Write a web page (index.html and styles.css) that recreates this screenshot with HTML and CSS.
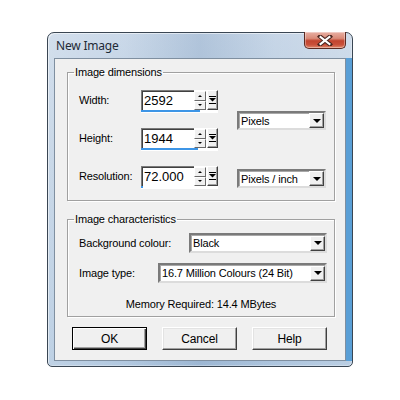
FILE: index.html
```html
<!DOCTYPE html>
<html>
<head>
<meta charset="utf-8">
<link rel="stylesheet" href="styles.css">
</head>
<body>
<div class="window">
  <div class="titlebar">
    <span class="title">New Image</span>
    <div class="close">
      <svg width="16" height="11" viewBox="0 0 16 11">
        <path d="M3 1.5 L13 9.5 M13 1.5 L3 9.5" stroke="#4a2620" stroke-width="4.2" stroke-linecap="square"/>
        <path d="M3.6 2 L12.4 9 M12.4 2 L3.6 9" stroke="#fff" stroke-width="2.2" stroke-linecap="square"/>
      </svg>
    </div>
  </div>
  <div class="client">
    <fieldset class="group dims">
      <legend>Image dimensions</legend>
      <div class="dims-grid">
        <span class="lbl row1">Width:</span>
        <div class="spin row1">
          <div class="spin-top">
            <div class="edit">2592</div>
            <div class="updown"><div class="sbtn"><i class="tri up"></i></div><div class="sbtn"><i class="tri dn"></i></div></div>
            <div class="drop"><svg width="7" height="9" viewBox="0 0 7 9"><rect x="0" y="0" width="7" height="1" fill="#000"/><path d="M0 2 H7 L3.5 5.5 Z" fill="#000"/><rect x="0" y="7" width="7" height="1" fill="#000"/></svg></div>
          </div>
          <div class="bar"><div class="fill" style="width:59px"></div></div>
        </div>
        <div class="combo unit">
          <span class="ctext">Pixels</span>
          <div class="cbtn"><i class="tri dn big"></i></div>
        </div>

        <span class="lbl row2">Height:</span>
        <div class="spin row2">
          <div class="spin-top">
            <div class="edit">1944</div>
            <div class="updown"><div class="sbtn"><i class="tri up"></i></div><div class="sbtn"><i class="tri dn"></i></div></div>
            <div class="drop"><svg width="7" height="9" viewBox="0 0 7 9"><rect x="0" y="0" width="7" height="1" fill="#000"/><path d="M0 2 H7 L3.5 5.5 Z" fill="#000"/><rect x="0" y="7" width="7" height="1" fill="#000"/></svg></div>
          </div>
          <div class="bar"><div class="fill" style="width:57px"></div></div>
        </div>

        <span class="lbl row3">Resolution:</span>
        <div class="spin row3">
          <div class="spin-top">
            <div class="edit">72.000</div>
            <div class="updown"><div class="sbtn"><i class="tri up"></i></div><div class="sbtn"><i class="tri dn"></i></div></div>
            <div class="drop"><svg width="7" height="9" viewBox="0 0 7 9"><rect x="0" y="0" width="7" height="1" fill="#000"/><path d="M0 2 H7 L3.5 5.5 Z" fill="#000"/><rect x="0" y="7" width="7" height="1" fill="#000"/></svg></div>
          </div>
          <div class="bar"><div class="fill" style="width:2px"></div></div>
        </div>
        <div class="combo res-unit row3">
          <span class="ctext">Pixels / inch</span>
          <div class="cbtn"><i class="tri dn big"></i></div>
        </div>
      </div>
    </fieldset>

    <fieldset class="group chars">
      <legend>Image characteristics</legend>
      <div class="chars-row first">
        <span class="lbl">Background colour:</span>
        <div class="combo bg">
          <span class="ctext">Black</span>
          <div class="cbtn"><i class="tri dn big"></i></div>
        </div>
      </div>
      <div class="chars-row second">
        <span class="lbl">Image type:</span>
        <div class="combo type">
          <span class="ctext">16.7 Million Colours (24 Bit)</span>
          <div class="cbtn"><i class="tri dn big"></i></div>
        </div>
      </div>
      <div class="memory">Memory Required: 14.4 MBytes</div>
    </fieldset>

    <div class="buttons">
      <div class="btn default">OK</div>
      <div class="btn">Cancel</div>
      <div class="btn">Help</div>
    </div>
  </div>
</div>
</body>
</html>
```

FILE: styles.css
```css
html, body {
  margin: 0;
  padding: 0;
  background: #ffffff;
}

body {
  width: 400px;
  height: 400px;
  overflow: hidden;
}

.window {
  box-sizing: border-box;
  margin: 32px 0 0 47px;
  width: 306px;
  height: 335px;
  border: 1px solid #3a4653;
  border-radius: 7px 7px 5px 5px;
  background:
    linear-gradient(90deg, rgba(255,255,255,0.25) 0%, rgba(255,255,255,0.1) 25%, rgba(120,150,185,0.25) 50%, rgba(255,255,255,0.05) 75%, rgba(255,255,255,0.2) 100%),
    linear-gradient(180deg, #c4d4e6 0%, #b7cbe0 40%, #a9c2dc 100%);
  display: flex;
  flex-direction: column;
  box-shadow: inset 1px 1px 0 rgba(255,255,255,0.55), inset -1px -1px 0 rgba(255,255,255,0.3);
}

.titlebar {
  height: 25px;
  display: flex;
  align-items: flex-start;
  justify-content: space-between;
  padding: 0 6px 0 8px;
}

.title {
  font-family: "Noto Sans", sans-serif;
  font-size: 12px;
  line-height: 25px;
  color: #1e2a36;
  letter-spacing: -0.2px;
}

.close {
  margin-top: -1px;
  width: 42px;
  height: 17px;
  box-sizing: border-box;
  border: 1px solid #5b2a22;
  border-top: none;
  border-radius: 0 0 5px 5px;
  background: linear-gradient(180deg, #e9b0a4 0%, #d98a78 40%, #c2442f 55%, #c9503a 80%, #e08a6e 100%);
  box-shadow: inset 0 0 0 1px rgba(255,255,255,0.35);
  display: flex;
  align-items: center;
  justify-content: center;
}

.client {
  margin: 0 6px;
  width: 292px;
  height: 303px;
  box-sizing: border-box;
  border: 1px solid #7f8fa0;
  background: #f0f0f0;
  box-shadow: 6px 0 0 #5a9fd6;
  font-family: "Liberation Sans", Arial, sans-serif;
  font-size: 11px;
  letter-spacing: -0.15px;
  color: #000;
  display: flex;
  flex-direction: column;
}

.group {
  margin: 0 0 0 12px;
  width: 268px;
  box-sizing: border-box;
  border: 1px solid #a0a0a0;
  padding: 0;
  min-width: 0;
  box-shadow: inset 1px 1px 0 #fff, 1px 1px 0 #fff;
}

.group legend {
  margin-left: 6px;
  padding: 0 1px;
  line-height: 13px;
  font-size: 11px;
}

.dims {
  margin-top: 7px;
  height: 135px;
}

.dims-grid {
  display: grid;
  grid-template-columns: 62px 77px 108px;
  grid-template-rows: 23px 23px 23px;
  column-gap: 0;
  row-gap: 15px;
  padding: 11px 0 0 11px;
}

.row1 { grid-row: 1; }
.row2 { grid-row: 2; }
.row3 { grid-row: 3; }

.lbl {
  grid-column: 1;
  height: 20px;
  line-height: 21px;
  white-space: nowrap;
}

.spin {
  grid-column: 2;
  display: flex;
  flex-direction: column;
  background: #fff;
}

.spin-top {
  display: flex;
  height: 20px;
}

.edit {
  width: 54px;
  box-sizing: border-box;
  border-top: 1px solid #7a7a7a;
  border-left: 1px solid #7a7a7a;
  box-shadow: inset 1px 1px 0 #404040;
  padding: 1px 0 0 2px;
  font-size: 13px;
  letter-spacing: 0;
  line-height: 17px;
  background: #fff;
}

.updown {
  width: 12px;
  margin-top: 1px;
  display: flex;
  flex-direction: column;
}

.sbtn {
  flex: 1;
  box-sizing: border-box;
  background: #f0f0f0;
  border: 1px solid;
  border-color: #fff #696969 #696969 #fff;
  display: flex;
  align-items: center;
  justify-content: center;
}

.tri {
  display: block;
  width: 0;
  height: 0;
  border-left: 2px solid transparent;
  border-right: 2px solid transparent;
}

.tri.up { border-bottom: 2px solid #000; }
.tri.dn { border-top: 2px solid #000; }

.tri.big {
  border-left-width: 4px;
  border-right-width: 4px;
  border-top-width: 4px;
}

.drop {
  width: 11px;
  margin-left: 1px;
  box-sizing: border-box;
  background: #f0f0f0;
  border: 1px solid;
  border-color: #fff #404040 #404040 #fff;
  box-shadow: inset -1px -1px 0 #a0a0a0;
  display: flex;
  align-items: center;
  justify-content: center;
}

.bar {
  height: 3px;
  background: #fff;
}

.fill {
  height: 2px;
  background: #3d95e6;
}

.combo {
  box-sizing: border-box;
  background: #fff;
  border: 2px solid;
  border-color: #7a7a7a #dcdcdc #dcdcdc #7a7a7a;
  box-shadow: inset 1px 1px 0 #a8a8a8;
  display: flex;
  align-items: center;
  justify-content: space-between;
  padding-left: 2px;
}

.ctext {
  white-space: nowrap;
  line-height: 14px;
}

.cbtn {
  width: 15px;
  height: 15px;
  box-sizing: border-box;
  background: #f0f0f0;
  border: 1px solid;
  border-color: #fff #404040 #404040 #fff;
  box-shadow: inset -1px -1px 0 #a0a0a0;
  display: flex;
  align-items: center;
  justify-content: center;
}

.unit {
  grid-column: 3;
  grid-row: 1 / 3;
  align-self: center;
  justify-self: end;
  width: 89px;
  height: 19px;
}

.res-unit {
  grid-column: 3;
  align-self: start;
  justify-self: end;
  width: 89px;
  margin-top: 3px;
  height: 19px;
}

.chars {
  margin-top: 12px;
  height: 104px;
}

.chars-row {
  display: flex;
  align-items: center;
  justify-content: space-between;
  padding: 0 7px 0 11px;
  height: 20px;
}

.chars-row.first { margin-top: 7px; }
.chars-row.second { margin-top: 10px; }

.combo.bg { width: 138px; height: 20px; }
.combo.type { width: 169px; height: 20px; }

.memory {
  text-align: center;
  margin-top: 14px;
  line-height: 14px;
}

.buttons {
  display: flex;
  gap: 15px;
  padding-left: 17px;
  margin-top: 10px;
}

.btn {
  width: 75px;
  height: 23px;
  box-sizing: border-box;
  background: #f0f0f0;
  border: 1px solid;
  border-color: #fff #404040 #404040 #fff;
  box-shadow: inset -1px -1px 0 #a0a0a0, inset 1px 1px 0 #e3e3e3;
  display: flex;
  align-items: center;
  justify-content: center;
  font-size: 12px;
}

.btn.default {
  border: 1px solid #000;
  box-shadow: inset 1px 1px 0 #fff, inset -1px -1px 0 #404040, inset -2px -2px 0 #a0a0a0;
}
```
